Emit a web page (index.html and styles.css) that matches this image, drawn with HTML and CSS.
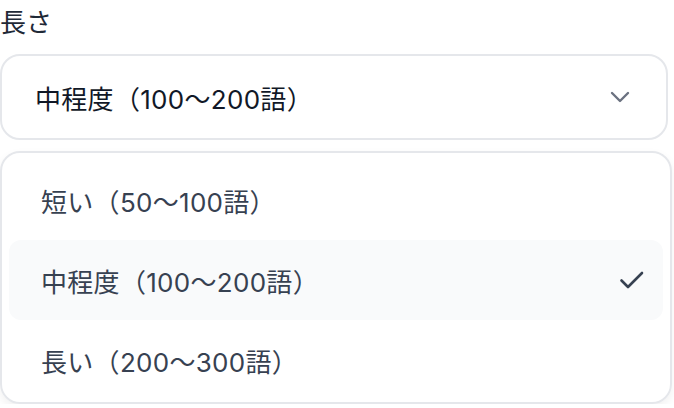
FILE: index.html
```html
<!DOCTYPE html>
<html lang="ja">

<head>
    <meta charset="UTF-8">
    <meta name="viewport" content="width=device-width, initial-scale=1.0">
    <title>長さ</title>
    <link rel="stylesheet" href="styles.css">
</head>

<body>
    <div class="field">
        <label class="field-label">長さ</label>
        <div class="select">
            <span class="select-value">中程度（100〜200語）</span>
            <svg class="chevron" width="20" height="12" viewBox="0 0 20 12" fill="none">
                <path d="M2 2l8 8 8-8" stroke="currentColor" stroke-width="2.4" stroke-linecap="round" stroke-linejoin="round" />
            </svg>
        </div>
        <ul class="options">
            <li class="option">短い（50〜100語）</li>
            <li class="option selected">
                <span>中程度（100〜200語）</span>
                <svg class="check" width="26" height="20" viewBox="0 0 26 20" fill="none">
                    <path d="M2.5 10.5l6.5 6.5 14-14" stroke="currentColor" stroke-width="2.6" stroke-linecap="round" stroke-linejoin="round" />
                </svg>
            </li>
            <li class="option">長い（200〜300語）</li>
        </ul>
    </div>
</body>

</html>
```

FILE: styles.css
```css
* {
    box-sizing: border-box;
}

body {
    margin: 0;
    background: #fff;
    font-family: "Inter", "Noto Sans CJK JP", sans-serif;
}

.field {
    width: 674px;
}

.field-label {
    display: block;
    height: 54px;
    padding-top: 3px;
    font-size: 26px;
    line-height: 40px;
    color: #1f2937;
}

.select {
    display: flex;
    align-items: center;
    justify-content: space-between;
    width: 668px;
    height: 86px;
    padding: 0 36px 0 33px;
    border: 2px solid #e5e7eb;
    border-radius: 20px;
    font-size: 26px;
    letter-spacing: 0.3px;
    color: #111827;
}

.chevron {
    color: #6b7280;
}

.options {
    list-style: none;
    margin: 11px 0 0;
    width: 672px;
    height: 253px;
    padding: 7px;
    border: 2px solid #e5e7eb;
    border-radius: 20px;
    box-shadow: 0 4px 10px rgba(0, 0, 0, 0.06);
}

.option {
    display: flex;
    align-items: center;
    justify-content: space-between;
    height: 80px;
    padding: 0 18px 0 32px;
    border-radius: 12px;
    font-size: 26px;
    letter-spacing: 0.3px;
    color: #374151;
}

.option.selected {
    background: #f9fafb;
}

.check {
    color: #374151;
}
```
